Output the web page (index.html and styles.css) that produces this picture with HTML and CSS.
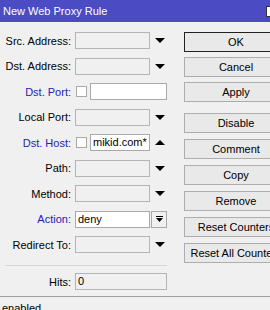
FILE: index.html
```html
<!DOCTYPE html>
<html lang="en">
<head>
	<meta charset="UTF-8">
	<title>New Web Proxy Rule</title>
	<link rel="stylesheet" href="styles.css">
</head>
<body>
	<div class="window">
		<div class="titlebar">
			<span class="title">New Web Proxy Rule</span>
			<span class="maxbtn"></span>
		</div>
		<div class="main">
			<div class="form">
				<div class="row">
					<span class="lbl">Src. Address:</span>
					<span class="input off w75"></span>
					<span class="arrow down"></span>
				</div>
				<div class="row">
					<span class="lbl">Dst. Address:</span>
					<span class="input off w75"></span>
					<span class="arrow down"></span>
				</div>
				<div class="row">
					<span class="lbl blue">Dst. Port:</span>
					<span class="check"></span>
					<span class="input w77"></span>
				</div>
				<div class="row">
					<span class="lbl">Local Port:</span>
					<span class="input off w75"></span>
					<span class="arrow down"></span>
				</div>
				<div class="row">
					<span class="lbl blue">Dst. Host:</span>
					<span class="check"></span>
					<span class="input w60">mikid.com*</span>
					<span class="arrow up"></span>
				</div>
				<div class="row">
					<span class="lbl">Path:</span>
					<span class="input off w75"></span>
					<span class="arrow down"></span>
				</div>
				<div class="row">
					<span class="lbl">Method:</span>
					<span class="input off w75"></span>
					<span class="arrow down"></span>
				</div>
				<div class="row">
					<span class="lbl blue">Action:</span>
					<span class="input w75">deny</span>
					<span class="dropbtn">
						<svg width="7" height="7" viewBox="0 0 7 7">
							<line x1="0" y1="0.5" x2="7" y2="0.5" stroke="#000" stroke-width="1"/>
							<polygon points="0,2 7,2 3.5,6" fill="#000"/>
						</svg>
					</span>
				</div>
				<div class="row">
					<span class="lbl">Redirect To:</span>
					<span class="input off w75"></span>
					<span class="arrow down"></span>
				</div>
				<div class="sep"></div>
				<div class="row">
					<span class="lbl">Hits:</span>
					<span class="input off w92">0</span>
				</div>
			</div>
			<div class="buttons">
				<div class="btn default">OK</div>
				<div class="btn">Cancel</div>
				<div class="btn">Apply</div>
				<div class="btn group">Disable</div>
				<div class="btn">Comment</div>
				<div class="btn">Copy</div>
				<div class="btn">Remove</div>
				<div class="btn">Reset Counters</div>
				<div class="btn">Reset All Counters</div>
			</div>
		</div>
		<div class="status">enabled</div>
	</div>
</body>
</html>
```

FILE: styles.css
```css
* {
	margin:0;
	padding:0;
	box-sizing:border-box;
}
body {
	background:#f0f0f0;
	font-family:"Liberation Sans", Arial, sans-serif;
	font-size:11px;
	color:#000;
	overflow:hidden;
}
.window {
	width:290px;
	height:310px;
	display:flex;
	flex-direction:column;
	overflow:hidden;
}
.titlebar {
	flex:none;
	height:22px;
	background:#4b4bc4;
	color:#fff;
	display:flex;
	align-items:center;
	padding-left:3px;
}
.title {
	font-size:11px;
}
.maxbtn {
	margin-left:auto;
	margin-right:13px;
	width:11px;
	height:11px;
	border:1px solid #333;
	background:#fff;
}
.main {
	flex:none;
	height:274px;
	display:flex;
	padding-top:10px;
}
.form {
	width:184px;
	display:flex;
	flex-direction:column;
}
.row {
	flex:none;
	height:17px;
	margin-bottom:8.5px;
	display:flex;
	align-items:center;
}
.lbl {
	width:71px;
	margin-right:4px;
	text-align:right;
	white-space:nowrap;
}
.blue {
	color:#2424b0;
}
.input {
	flex:none;
	height:17px;
	border:1px solid #a9a9a9;
	background:#fff;
	padding-left:2px;
	line-height:15px;
	white-space:nowrap;
	overflow:hidden;
}
.input.off {
	background:#f0f0f0;
	border-color:#b4b4b4;
}
.w60 { width:60px; }
.w75 { width:75px; }
.w77 { width:77px; }
.w92 { width:92px; }
.check {
	flex:none;
	width:11px;
	height:11px;
	margin-left:1px;
	margin-right:3px;
	border:1px solid #a9a9a9;
	background:#fff;
}
.arrow {
	flex:none;
	width:0;
	height:0;
	margin-left:5px;
	border-left:5px solid transparent;
	border-right:5px solid transparent;
}
.arrow.down {
	border-top:5px solid #000;
}
.arrow.up {
	border-bottom:5px solid #000;
}
.dropbtn {
	flex:none;
	width:16px;
	height:17px;
	margin-left:1px;
	border:1px solid #a9a9a9;
	background:#f0f0f0;
	display:flex;
	align-items:center;
	justify-content:center;
}
.sep {
	flex:none;
	width:162px;
	margin:3.5px 0 7px 5px;
	border-top:1px solid #d6d6d6;
}
.buttons {
	width:104px;
	display:flex;
	flex-direction:column;
}
.btn {
	flex:none;
	height:20px;
	margin-bottom:6px;
	border:1px solid #adadad;
	background:#e9e9e9;
	display:flex;
	align-items:center;
	justify-content:center;
	white-space:nowrap;
}
.btn.default {
	border-color:#222;
}
.btn.default,
.btn:nth-child(2) {
	margin-bottom:5px;
}
.btn.group {
	margin-top:5px;
}
.status {
	flex:none;
	border-top:1px solid #a0a0a0;
	padding:5px 0 0 2px;
}
```
